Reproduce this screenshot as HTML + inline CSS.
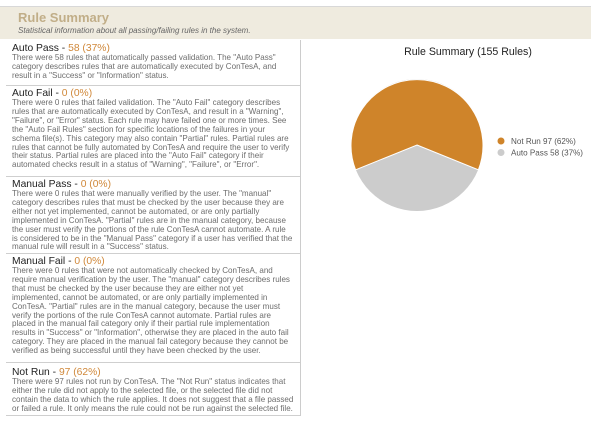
<!DOCTYPE html>
<html><head><meta charset="utf-8"><style>
*{margin:0;padding:0;box-sizing:border-box}
body{width:591px;height:425px;background:#fff;font-family:"Liberation Sans",sans-serif;position:relative;overflow:hidden}
.hdr{position:absolute;left:0;top:6px;width:591px;height:33px;background:#efebdf;border-top:1px solid #d8d8d8}
.hdr h1{position:absolute;left:18px;top:3px;font-size:13px;font-weight:bold;color:#c1ae88}
.hdr p{position:absolute;left:18px;top:19px;font-size:8px;font-style:italic;color:#666}
.col{position:absolute;left:5px;top:40px;width:296px;height:376px;border-right:1px solid #ccc}
.box{position:absolute;left:1px;width:294px;border-bottom:1px solid #cfcfcf;padding-left:6px;overflow:hidden}
.t{font-size:10.3px;color:#222;margin-top:3px;line-height:11px;white-space:nowrap}
.t span{color:#d0883a}
.d{font-size:8.05px;color:#6d6d6d;line-height:8.9px;white-space:nowrap}
</style></head><body>
<div class="hdr"><h1>Rule Summary</h1><p>Statistical information about all passing/failing rules in the system.</p></div>
<div class="col">
<div class="box" style="top:0;height:46px"><div class="t">Auto Pass - <span>58 (37%)</span></div><div class="d">There were 58 rules that automatically passed validation. The "Auto Pass"<br>category describes rules that are automatically executed by ConTesA, and<br>result in a "Success" or "Information" status.</div></div>
<div class="box" style="top:45px;height:92px"><div class="t">Auto Fail - <span>0 (0%)</span></div><div class="d">There were 0 rules that failed validation. The "Auto Fail" category describes<br>rules that are automatically executed by ConTesA, and result in a "Warning",<br>"Failure", or "Error" status. Each rule may have failed one or more times. See<br>the "Auto Fail Rules" section for specific locations of the failures in your<br>schema file(s). This category may also contain "Partial" rules. Partial rules are<br>rules that cannot be fully automated by ConTesA and require the user to verify<br>their status. Partial rules are placed into the "Auto Fail" category if their<br>automated checks result in a status of "Warning", "Failure", or "Error".</div></div>
<div class="box" style="top:136px;height:78px"><div class="t">Manual Pass - <span>0 (0%)</span></div><div class="d">There were 0 rules that were manually verified by the user. The "manual"<br>category describes rules that must be checked by the user because they are<br>either not yet implemented, cannot be automated, or are only partially<br>implemented in ConTesA. "Partial" rules are in the manual category, because<br>the user must verify the portions of the rule ConTesA cannot automate. A rule<br>is considered to be in the "Manual Pass" category if a user has verified that the<br>manual rule will result in a "Success" status.</div></div>
<div class="box" style="top:213px;height:110px"><div class="t">Manual Fail - <span>0 (0%)</span></div><div class="d">There were 0 rules that were not automatically checked by ConTesA, and<br>require manual verification by the user. The "manual" category describes rules<br>that must be checked by the user because they are either not yet<br>implemented, cannot be automated, or are only partially implemented in<br>ConTesA. "Partial" rules are in the manual category, because the user must<br>verify the portions of the rule ConTesA cannot automate. Partial rules are<br>placed in the manual fail category only if their partial rule implementation<br>results in "Success" or "Information", otherwise they are placed in the auto fail<br>category. They are placed in the manual fail category because they cannot be<br>verified as being successful until they have been checked by the user.</div></div>
<div class="box" style="top:322px;height:54px"><div class="t" style="margin-top:5px">Not Run - <span>97 (62%)</span></div><div class="d">There were 97 rules not run by ConTesA. The "Not Run" status indicates that<br>either the rule did not apply to the selected file, or the selected file did not<br>contain the data to which the rule applies. It does not suggest that a file passed<br>or failed a rule. It only means the rule could not be run against the selected file.</div></div>
</div>
<svg style="position:absolute;left:0;top:0" width="591" height="425">
<text x="468" y="55" font-family="Liberation Sans" font-size="10.6" fill="#222" text-anchor="middle">Rule Summary (155 Rules)</text>
<circle cx="417" cy="145" r="66" fill="#cccccc"/>
<path d="M417 145 L478.4 169.8 A66 66 0 1 0 355.6 169.8 Z" fill="#cf842a" stroke="#fff" stroke-width="1"/>
<circle cx="501" cy="141" r="3.5" fill="#cf842a"/>
<circle cx="501" cy="152.5" r="3.5" fill="#cccccc"/>
<text x="511" y="144" font-family="Liberation Sans" font-size="8.1" fill="#555">Not Run 97 (62%)</text>
<text x="511" y="155.5" font-family="Liberation Sans" font-size="8.1" fill="#555">Auto Pass 58 (37%)</text>
</svg>
</body></html>
